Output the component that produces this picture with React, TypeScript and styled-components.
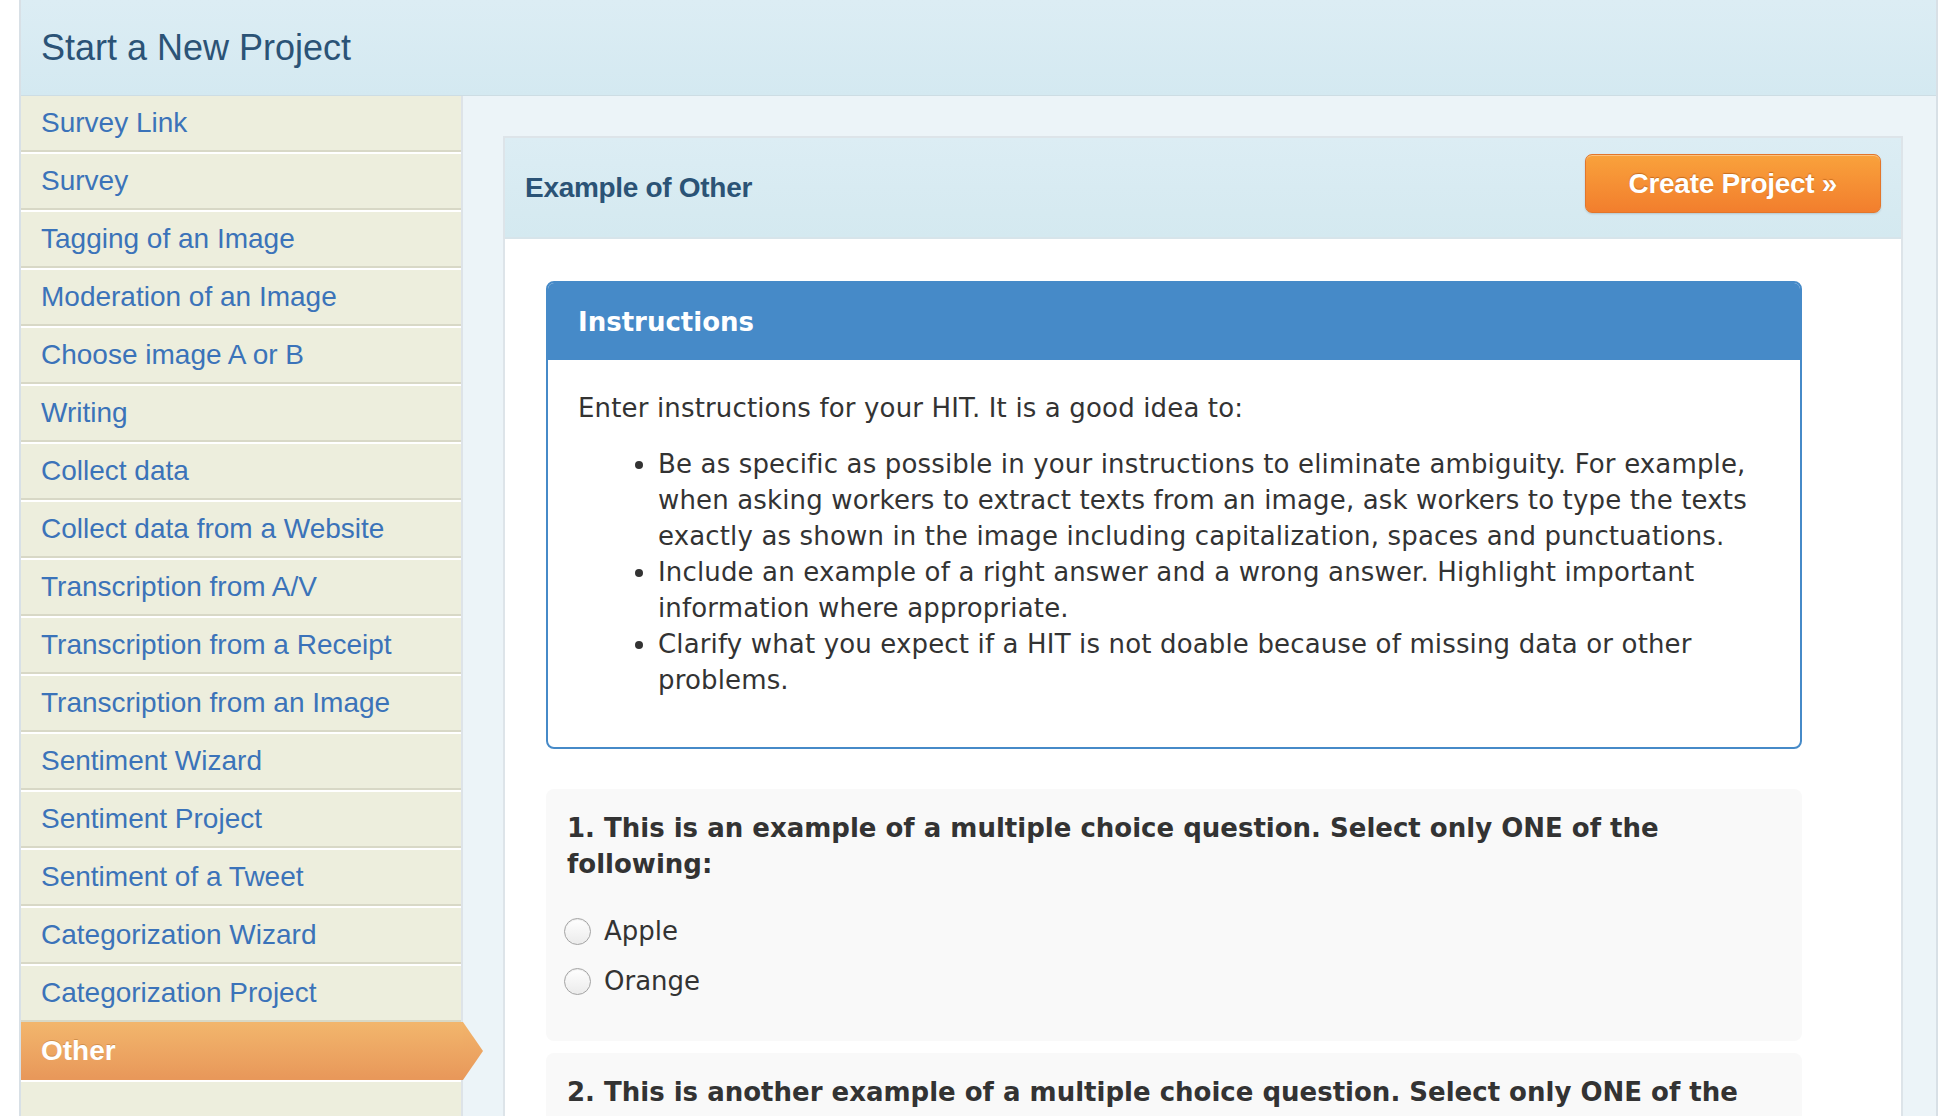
import React from "react";
import styled, { createGlobalStyle } from "styled-components";

const Global = createGlobalStyle`
  html, body { margin: 0; padding: 0; background: #ffffff; }
  * { box-sizing: border-box; }
`;

const Frame = styled.div`
  margin-left: 19px;
  width: 1919px;
  border-left: 2px solid #d8e0e6;
  border-right: 2px solid #d8e0e6;
  background: #ecf4f8;
  font-family: "Liberation Sans", Arial, sans-serif;
`;

const TopBar = styled.header`
  height: 96px;
  display: flex;
  align-items: center;
  padding-left: 20px;
  background: linear-gradient(#dcedf4, #d4e9f1);
  border-bottom: 1px solid #cddde4;
`;

const PageTitle = styled.h1`
  margin: 0;
  font-size: 36px;
  font-weight: normal;
  color: #2b5376;
`;

const Body = styled.div`
  display: flex;
  align-items: stretch;
`;

const Sidebar = styled.nav`
  width: 442px;
  flex: none;
  background: #edeedd;
  border-right: 2px solid #dde3e8;
  display: flex;
  flex-direction: column;
`;

const NavItem = styled.div<{ $active?: boolean }>`
  position: relative;
  z-index: ${(p) => (p.$active ? 2 : 1)};
  height: 58px;
  flex: none;
  display: flex;
  align-items: center;
  padding-left: 20px;
  font-size: 28px;
  color: ${(p) => (p.$active ? "#ffffff" : "#3b73b9")};
  font-weight: ${(p) => (p.$active ? "bold" : "normal")};
  text-shadow: ${(p) => (p.$active ? "0 -1px 0 rgba(120,60,0,0.25)" : "none")};
  background: ${(p) =>
    p.$active ? "linear-gradient(#f2b56c, #e8985a)" : "#edeedd"};
  border-top: 2px solid ${(p) => (p.$active ? "#f2b56c" : "#ffffff")};
  border-bottom: 2px solid ${(p) => (p.$active ? "#e8985a" : "#d8d8c6")};
  margin-right: ${(p) => (p.$active ? "-2px" : "0")};

  &:first-child {
    height: 56px;
    border-top: none;
  }

  &::after {
    content: "";
    display: ${(p) => (p.$active ? "block" : "none")};
    position: absolute;
    top: -2px;
    bottom: -2px;
    left: 100%;
    width: 20px;
    background: linear-gradient(#f2b56c, #e8985a);
    clip-path: polygon(0 0, 100% 50%, 0 100%);
  }
`;

const Filler = styled.div`
  flex: 1;
  min-height: 58px;
  border-top: 2px solid #ffffff;
  background: #edeedd;
`;

const Content = styled.main`
  flex: 1;
  padding: 40px 33px 0 40px;
`;

const Card = styled.section`
  border: 2px solid #dde4e9;
  background: #ffffff;
`;

const CardHeader = styled.div`
  height: 101px;
  display: flex;
  align-items: center;
  justify-content: space-between;
  padding: 0 20px;
  background: linear-gradient(#dcedf4, #d4e9f0);
  border-bottom: 2px solid #d7e4ea;
`;

const CardTitle = styled.h2`
  margin: 0;
  font-size: 28px;
  font-weight: bold;
  color: #2b5376;
  letter-spacing: -0.3px;
`;

const CreateButton = styled.button`
  align-self: flex-start;
  margin-top: 16px;
  height: 59px;
  padding: 0 43px;
  border: 1px solid #e3762b;
  border-radius: 7px;
  background: linear-gradient(#f9a23c, #f27e2d);
  color: #ffffff;
  font-family: "Liberation Sans", Arial, sans-serif;
  font-size: 28px;
  font-weight: bold;
  letter-spacing: -0.3px;
  text-shadow: 0 -1px 1px rgba(140, 60, 0, 0.45);
  box-shadow: inset 0 1px 0 rgba(255, 255, 255, 0.35), 0 1px 2px rgba(0, 0, 0, 0.15);
  cursor: pointer;
`;

const CardBody = styled.div`
  padding: 42px 40px 40px 41px;
  font-family: "DejaVu Sans", Verdana, sans-serif;
  color: #333333;
`;

const Panel = styled.div`
  width: 1256px;
  border: 2px solid #468ac8;
  border-radius: 8px;
  overflow: hidden;
  margin-bottom: 40px;
`;

const PanelHead = styled.div`
  height: 77px;
  display: flex;
  align-items: center;
  padding-left: 30px;
  background: #468ac8;
  color: #ffffff;
  font-size: 26px;
  font-weight: bold;
`;

const PanelBody = styled.div`
  padding: 30px 30px 49px 30px;
  font-size: 26px;
  line-height: 36px;
  letter-spacing: 0.15px;
`;

const Para = styled.p`
  margin: 0;
`;

const BulletList = styled.ul`
  margin: 20px 0 0 0;
  padding-left: 80px;
  list-style: disc;
`;

const QuestionBox = styled.div`
  width: 1256px;
  background: #f9f9f9;
  border-radius: 8px;
  padding: 21px 21px 42px 21px;
  margin-bottom: 12px;
`;

const QuestionTitle = styled.div`
  font-size: 26px;
  line-height: 36px;
  font-weight: bold;
  color: #333333;
  margin-bottom: 31px;
`;

const Options = styled.div`
  display: flex;
  flex-direction: column;
  gap: 14px;
`;

const OptionRow = styled.label`
  display: flex;
  align-items: center;
  gap: 13px;
  font-size: 26px;
  line-height: 36px;
  color: #333333;
`;

const Radio = styled.span`
  width: 27px;
  height: 27px;
  margin-left: -3px;
  flex: none;
  border-radius: 50%;
  border: 1px solid #a4a4a4;
  background: linear-gradient(#ffffff, #ebebeb);
  box-shadow: inset 0 1px 1px rgba(0, 0, 0, 0.08);
`;

const items = [
  "Survey Link",
  "Survey",
  "Tagging of an Image",
  "Moderation of an Image",
  "Choose image A or B",
  "Writing",
  "Collect data",
  "Collect data from a Website",
  "Transcription from A/V",
  "Transcription from a Receipt",
  "Transcription from an Image",
  "Sentiment Wizard",
  "Sentiment Project",
  "Sentiment of a Tweet",
  "Categorization Wizard",
  "Categorization Project",
  "Other",
];

const questions = [
  {
    title:
      "1. This is an example of a multiple choice question. Select only ONE of the following:",
    options: ["Apple", "Orange"],
  },
  {
    title:
      "2. This is another example of a multiple choice question. Select only ONE of the following:",
    options: ["Yes", "No"],
  },
];

export default function App() {
  return (
    <>
      <Global />
      <Frame>
        <TopBar>
          <PageTitle>Start a New Project</PageTitle>
        </TopBar>
        <Body>
          <Sidebar>
            {items.map((it) => (
              <NavItem key={it} $active={it === "Other"}>
                {it}
              </NavItem>
            ))}
            <Filler />
          </Sidebar>
          <Content>
            <Card>
              <CardHeader>
                <CardTitle>Example of Other</CardTitle>
                <CreateButton>Create Project »</CreateButton>
              </CardHeader>
              <CardBody>
                <Panel>
                  <PanelHead>Instructions</PanelHead>
                  <PanelBody>
                    <Para>Enter instructions for your HIT. It is a good idea to:</Para>
                    <BulletList>
                      <li>
                        Be as specific as possible in your instructions to eliminate ambiguity. For
                        example, when asking workers to extract texts from an image, ask workers to
                        type the texts exactly as shown in the image including capitalization, spaces
                        and punctuations.
                      </li>
                      <li>
                        Include an example of a right answer and a wrong answer. Highlight important
                        information where appropriate.
                      </li>
                      <li>
                        Clarify what you expect if a HIT is not doable because of missing data or
                        other problems.
                      </li>
                    </BulletList>
                  </PanelBody>
                </Panel>
                {questions.map((q) => (
                  <QuestionBox key={q.title}>
                    <QuestionTitle>{q.title}</QuestionTitle>
                    <Options>
                      {q.options.map((o) => (
                        <OptionRow key={o}>
                          <Radio />
                          {o}
                        </OptionRow>
                      ))}
                    </Options>
                  </QuestionBox>
                ))}
              </CardBody>
            </Card>
          </Content>
        </Body>
      </Frame>
    </>
  );
}
